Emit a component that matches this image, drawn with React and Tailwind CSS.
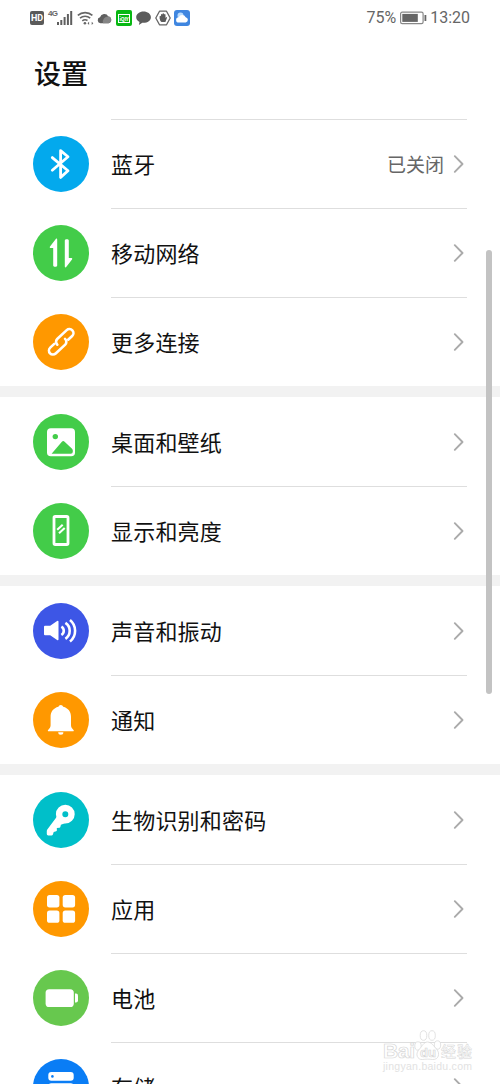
import React from 'react';

const BluetoothIcon = () => (
    <path d="M19.3 21.6 35 34.8 27.6 41.4V14.6L35 20.8 19.3 34.2" fill="none" stroke="#fff" strokeWidth="2.8" strokeLinejoin="round" strokeLinecap="round" />
);

const NetworkIcon = () => (
    <path d="M23 13.8c.6-.5 1.2 0 1.2.6v26c0 1.8-4 1.8-4 0V23h-2.4c-1 0-1.4-.8-.8-1.6zM33 42.2c-.6.5-1.2 0-1.2-.6v-26c0-1.8 4-1.8 4 0V33h2.4c1 0 1.4.8.8 1.6z" fill="#fff" />
);

const LinkIcon = () => (
    <g transform="translate(28.2 27.8) rotate(-43)" fill="none" stroke="#fff" strokeWidth="2.6" strokeLinecap="round">
        <path d="M-6.500-3.200h-5.500a4 4 0 0 0 0 8H1a4 4 0 0 0 3.800-4.300" />
        <path d="M6.500 3.200h5.500a4 4 0 0 0 0-8H-1a4 4 0 0 0-3.800 4.300" />
    </g>
);

const WallpaperIcon = () => (
    <>
        <rect x="14" y="14.2" width="28" height="28" rx="3.8" fill="#fff" />
        <circle cx="22.3" cy="22.6" r="2.7" fill="#43cc49" />
        <path d="M18.6 39.8 28.9 27.7q1.3-1.4 2.7 0l7.2 6.7q1 1 1 2.2v1.2q0 2-2 2z" fill="#43cc49" />
    </>
);

const DisplayIcon = () => (
    <g fill="none" stroke="#fff">
        <rect x="21" y="13.5" width="14" height="28" rx="1.2" strokeWidth="2.8" />
        <path d="m24.2 26.8 5.500-5M26 30.200l5.700-5.200" strokeWidth="2.1" />
    </g>
);

const SoundIcon = () => (
    <>
        <path d="M11 23.7q0-1 1-1h5.2l6.9-4.8q1.4-.7 1.4.8v17.6q0 1.5-1.4.8l-6.9-4.8H12q-1 0-1-1z" fill="#fff" />
        <path d="M28.4 23.6a4.9 4.9 0 0 1 0 8.4M32.4 19.8a9.6 9.6 0 0 1 0 16M37 17a14 14 0 0 1 0 21.600" fill="none" stroke="#fff" strokeWidth="2.6" />
    </>
);

const BellIcon = () => (
    <>
        <path d="M25.4 14.7a2.5 2.5 0 0 1 4.8 0c5 1.3 7.8 5 7.8 10v8.5c0 2 .9 3 2.5 4.7.6.7.2 1.3-.6 1.3H15.7c-.8 0-1.2-.6-.6-1.3 1.6-1.7 2.5-2.7 2.5-4.7v-8.500c0-5 2.800-8.700 7.800-10z" fill="#fff" />
        <path d="M25.2 40.2h5.2a2.6 2.5 0 0 1-5.2 0z" fill="#fff" />
    </>
);

const KeyIcon = () => (
    <>
        <path d="M24 24.5 14.3 37.5q-.5.7-.5 1.5v3q0 1.4 1.4 1.4h3.3q1 0 1.4-.9l.8-2.6 2.5-.6q.8-.3.7-1.2l-.1-2.1 2.6-.2q.8-.1 1-1l.5-2.1 4-1.5z" fill="#fff" />
        <circle cx="32.3" cy="22.2" r="6.2" fill="none" stroke="#fff" strokeWidth="6.4" />
    </>
);

const AppsIcon = () => (
    <g fill="#fff">
        <rect x="14" y="14" width="12.4" height="12.4" rx="2.6" />
        <rect x="29.7" y="14" width="12.4" height="12.4" rx="2.6" />
        <rect x="14" y="29.4" width="12.4" height="12.4" rx="2.6" />
        <rect x="29.7" y="29.4" width="12.4" height="12.4" rx="2.6" />
    </g>
);

const BatteryIcon = () => (
    <g fill="#fff">
        <rect x="12.6" y="19.2" width="28.2" height="17.8" rx="3.6" />
        <path d="M42 23.5h1q2 0 2 2v5q0 2-2 2h-1z" />
    </g>
);

const StorageIcon = () => (
    <>
        <rect x="15.3" y="13" width="25.4" height="8.8" rx="3" fill="#fff" />
        <rect x="15.3" y="24.2" width="25.4" height="8.8" rx="3" fill="#fff" />
        <circle cx="19.4" cy="17.4" r="1.3" fill="#0a7df5" />
    </>
);

const sections = [
    [
        { label: '蓝牙', color: 'bg-[#03a9ed]', Icon: BluetoothIcon, value: '已关闭', line: true },
        { label: '移动网络', color: 'bg-[#43cc49]', Icon: NetworkIcon, line: true },
        { label: '更多连接', color: 'bg-[#ff9800]', Icon: LinkIcon, line: true },
    ],
    [
        { label: '桌面和壁纸', color: 'bg-[#43cc49]', Icon: WallpaperIcon },
        { label: '显示和亮度', color: 'bg-[#43cc49]', Icon: DisplayIcon, line: true },
    ],
    [
        { label: '声音和振动', color: 'bg-[#3d56e6]', Icon: SoundIcon },
        { label: '通知', color: 'bg-[#ff9800]', Icon: BellIcon, line: true },
    ],
    [
        { label: '生物识别和密码', color: 'bg-[#00bfc9]', Icon: KeyIcon },
        { label: '应用', color: 'bg-[#ff9800]', Icon: AppsIcon, line: true },
        { label: '电池', color: 'bg-[#67c84e]', Icon: BatteryIcon, line: true },
        { label: '存储', color: 'bg-[#0a7df5]', Icon: StorageIcon, line: true },
    ],
];

const StatusBar = () => (
    <div className="flex h-9 items-center justify-between px-[30px] text-[#666]">
        <div className="flex items-center">
            <span className="flex h-[14px] w-[14px] items-center justify-center rounded-[2px] bg-[#5a5a5a] font-['Roboto',sans-serif] text-[9px] font-bold leading-none tracking-tight text-white">HD</span>
            <span className="ml-1 mb-[9px] w-[9px] font-['Liberation_Sans',sans-serif] text-[8px] font-bold leading-none tracking-[-0.8px]">4G</span>
            <svg className="h-4 w-4" viewBox="0 0 16 16" fill="#5f5f5f">
                <path d="M0 12h2v3H0zM3.3 10h2v5h-2zM6.6 7h2v8h-2zM9.9 4h2v11h-2zM13.2 1h2v14h-2z" />
            </svg>
            <svg className="ml-1 h-4 w-[17px]" viewBox="0 0 17 16" fill="none" stroke="#666" strokeWidth="1.6">
                <path d="M.8 5.4a11 11 0 0 1 14.6 0M3 8.200a7.800 7.800 0 0 1 10.200 0M5.300 10.800a4.500 4.500 0 0 1 5.200-.3" />
                <circle cx="7.9" cy="13.2" r="1.3" fill="#666" stroke="none" />
                <path d="m10.5 13.3 1.6-1.6v3.2zM16.3 13.3l-1.6-1.6v3.2z" fill="#666" stroke="none" />
            </svg>
            <svg className="ml-[3px] h-4 w-[15px]" viewBox="0 0 15 16">
                <path d="M3.5 13.2A3 3 0 0 1 3 7.3a4.5 4.5 0 0 1 8.3-.8A3.4 3.4 0 0 1 11.5 13.2z" fill="#5f5f5f" />
                <path d="M6 13.2a5.2 5.2 0 0 1 5.3-6.7A3.4 3.4 0 0 1 11.5 13.2z" fill="#858585" />
            </svg>
            <span className="ml-1 flex h-4 w-4 items-center justify-center rounded-[2px] bg-[#08b812]">
                <span className="flex h-[9px] w-3 items-center justify-center border border-white text-[5px] font-bold leading-none tracking-tighter text-white">iQIY</span>
            </span>
            <svg className="ml-1 h-4 w-[15px]" viewBox="0 0 15 16">
                <path d="M7.5 1.5C3.5 1.5.2 4 .2 7.2c0 2 1.3 3.8 3.3 4.7l-.6 3 3.4-2.1c5 .4 8.600-2 8.600-5.600 0-3.300-3.400-5.700-7.400-5.700z" fill="#5c5c5c" />
            </svg>
            <svg className="ml-1 h-4 w-4" viewBox="0 0 16 16">
                <path d="M4.5 1.2h7L15.2 8l-3.7 6.8h-7L.8 8z" fill="none" stroke="#666" strokeWidth="1.3" strokeLinejoin="round" />
                <path d="M4.6 8.5V6.3q.7-1 1.4 0V4.4q.7-.9 1.5 0V3.7q.8-.8 1.5 0v.8q.8-.8 1.5.1V8l1-1q.9.2.4 1.1L10.400 12H6.500q-1.500-1-1.900-3.500z" fill="#5c5c5c" />
            </svg>
            <svg className="ml-[3px] h-4 w-4" viewBox="0 0 16 16">
                <rect width="16" height="16" rx="3" fill="#3f86e0" />
                <circle cx="6.5" cy="5.5" r="3" fill="#b9dcff" />
                <path d="M4.7 12.5a2.6 2.6 0 0 1 0-5.2 3.9 3.9 0 0 1 7-.1 2.7 2.7 0 0 1 0 5.300z" fill="#fff" />
            </svg>
        </div>
        <div className="flex items-center font-['Roboto',sans-serif] text-[16px] leading-none">
            <span>75%</span>
            <svg className="ml-1 h-[14px] w-[27px]" viewBox="0 0 27 14">
                <rect x=".6" y="1.2" width="22.5" height="11.4" rx="1.6" fill="none" stroke="#888" strokeWidth="1.2" />
                <rect x="2.3" y="2.9" width="15.5" height="8" fill="#666" />
                <path d="M24.5 4h1.8v6h-1.8z" fill="#666" />
            </svg>
            <span className="ml-[3px]">13:20</span>
        </div>
    </div>
);

const SettingRow = ({ label, color, Icon, value, line }) => (
    <div className="flex h-[89px] px-[33px]">
        <div className={`mt-[17px] h-14 w-14 shrink-0 rounded-full ${color}`}>
            <svg className="h-14 w-14" viewBox="0 0 56 56">
                <Icon />
            </svg>
        </div>
        <div className={`ml-[22px] flex flex-1 items-center border-t ${line ? 'border-[#dedede]' : 'border-transparent'}`}>
            <span className="pb-[2px] text-[22px] leading-none tracking-[0.2px] text-[#111]">{label}</span>
            {value && <span className="ml-auto pb-px text-[19px] leading-none text-[#666]">{value}</span>}
            <svg className={`mr-[2px] h-5 w-3 ${value ? 'ml-[9px]' : 'ml-auto'}`} viewBox="0 0 12 20">
                <path d="m1.8 2.2 7.7 7.8-7.7 7.8" fill="none" stroke="#aaa" strokeWidth="1.9" strokeLinecap="round" strokeLinejoin="round" />
            </svg>
        </div>
    </div>
);

const Watermark = () => (
    <svg className="absolute left-[380px] top-[1026px] h-[52px] w-[100px]" viewBox="0 0 100 52" fill="#fff" stroke="#d6d6d6" strokeWidth=".7">
        <text x="3" y="32" fontSize="21" fontWeight="700" textLength="32" fontFamily="Liberation Sans, sans-serif">Bai</text>
        <ellipse cx="38" cy="20" rx="3.2" ry="4.2" />
        <ellipse cx="43.5" cy="9.5" rx="3.3" ry="4.8" />
        <ellipse cx="52" cy="9.5" rx="3.3" ry="4.8" />
        <ellipse cx="57.5" cy="19" rx="3.2" ry="4.2" />
        <path d="M47.5 16c-4 0-5 4-8 7-5 5-2 11 3 10.500 3-.5 7-.5 10 0 6 .5 8-6 4-10.500-3-3-5-7-9-7z" />
        <text x="40" y="31" fontSize="13" fontWeight="700" fontFamily="Liberation Sans, sans-serif">du</text>
        <text x="61" y="31" fontSize="15" fontWeight="500" textLength="31" strokeWidth=".5" fontFamily="Noto Sans CJK SC, sans-serif">经验</text>
        <text x="3" y="44" fontSize="10.5" textLength="89" fill="#e2e2e2" stroke="none" fontFamily="Liberation Sans, sans-serif">jingyan.baidu.com</text>
    </svg>
);

const App = () => {
    return (
        <div className="relative h-[1084px] w-[500px] overflow-hidden bg-white font-['Noto_Sans_CJK_SC',sans-serif]">
            <StatusBar />
            <h1 className="flex h-[83px] pl-[34px] pt-[23px] text-[27px] font-medium leading-none text-[#111]">设置</h1>
            <div className="flex flex-col">
                {sections.map((rows, i) => (
                    <React.Fragment key={i}>
                        {i > 0 && <div className="h-[11px] bg-[#f2f2f2]" />}
                        <div>
                            {rows.map(row => <SettingRow key={row.label} {...row} />)}
                        </div>
                    </React.Fragment>
                ))}
            </div>
            {/* scroll thumb floats over the list */}
            <div className="absolute left-[486px] top-[250px] h-[444px] w-[6px] rounded-full bg-[#c3c3c3]" />
            <Watermark />
        </div>
    );
};

export default App;
